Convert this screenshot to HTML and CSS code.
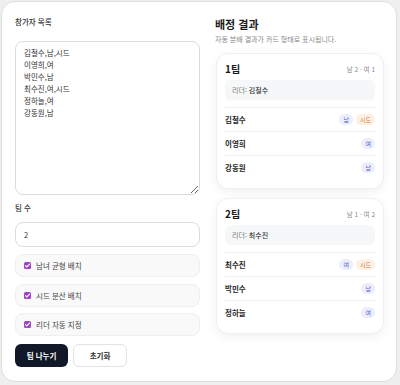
FILE: index.html
```html
<!DOCTYPE html>
<html lang="ko">
<head>
<meta charset="utf-8">
<link rel="stylesheet" href="styles.css">
</head>
<body>
<div class="app">
  <section class="left">
    <label class="label">참가자 목록</label>
    <textarea class="roster">김철수,남,시드
이영희,여
박민수,남
최수진,여,시드
정하늘,여
강동원,남</textarea>
    <label class="label label-count">팀 수</label>
    <input class="count" type="text" value="2">
    <label class="opt"><span class="check"><svg viewBox="0 0 8 8" width="8" height="8"><path d="M1.7 4.1 L3.3 5.7 L6.4 2.3" fill="none" stroke="#fff" stroke-width="1.3" stroke-linecap="round" stroke-linejoin="round"/></svg></span>남녀 균형 배치</label>
    <label class="opt"><span class="check"><svg viewBox="0 0 8 8" width="8" height="8"><path d="M1.7 4.1 L3.3 5.7 L6.4 2.3" fill="none" stroke="#fff" stroke-width="1.3" stroke-linecap="round" stroke-linejoin="round"/></svg></span>시드 분산 배치</label>
    <label class="opt opt-last"><span class="check"><svg viewBox="0 0 8 8" width="8" height="8"><path d="M1.7 4.1 L3.3 5.7 L6.4 2.3" fill="none" stroke="#fff" stroke-width="1.3" stroke-linecap="round" stroke-linejoin="round"/></svg></span>리더 자동 지정</label>
    <div class="actions">
      <button class="btn btn-primary">팀 나누기</button>
      <button class="btn btn-secondary">초기화</button>
    </div>
  </section>
  <section class="right">
    <h2 class="title">배정 결과</h2>
    <p class="sub">자동 분배 결과가 카드 형태로 표시됩니다.</p>
    <div class="team">
      <div class="team-head"><span class="team-name">1팀</span><span class="team-count">남 2 · 여 1</span></div>
      <div class="leader">리더: <span class="leader-name">김철수</span></div>
      <ul class="members">
        <li class="member"><span class="m-name">김철수</span><span class="tags"><span class="tag tag-g">남</span><span class="tag tag-s">시드</span></span></li>
        <li class="member"><span class="m-name">이영희</span><span class="tags"><span class="tag tag-g">여</span></span></li>
        <li class="member"><span class="m-name">강동원</span><span class="tags"><span class="tag tag-g">남</span></span></li>
      </ul>
    </div>
    <div class="team team-2">
      <div class="team-head"><span class="team-name">2팀</span><span class="team-count">남 1 · 여 2</span></div>
      <div class="leader">리더: <span class="leader-name">최수진</span></div>
      <ul class="members">
        <li class="member"><span class="m-name">최수진</span><span class="tags"><span class="tag tag-g">여</span><span class="tag tag-s">시드</span></span></li>
        <li class="member"><span class="m-name">박민수</span><span class="tags"><span class="tag tag-g">남</span></span></li>
        <li class="member"><span class="m-name">정하늘</span><span class="tags"><span class="tag tag-g">여</span></span></li>
      </ul>
    </div>
  </section>
</div>
</body>
</html>
```

FILE: styles.css
```css
* { box-sizing: border-box; }
html, body { margin: 0; }
body {
  background: #efefef;
  font-family: "Noto Sans CJK KR", "Noto Sans", sans-serif;
  color: #222;
}
.app {
  margin: 1px;
  width: 396px;
  height: 381px;
  background: #fff;
  border: 1px solid #dedede;
  border-radius: 14px;
  display: grid;
  grid-template-columns: 185px 170px;
  column-gap: 15px;
  padding: 15px 11px 0 13px;
  align-items: start;
}
.left { display: flex; flex-direction: column; }
.label {
  font-size: 7.5px;
  line-height: 10px;
  color: #333;
  font-weight: 500;
}
.roster {
  margin-top: 14px;
  width: 185px;
  height: 154px;
  border: 1px solid #dcdcdc;
  border-radius: 8px;
  padding: 5px 8px;
  font-family: inherit;
  font-size: 7.5px;
  line-height: 12px;
  color: #333;
  background: #fff;
  outline: none;
}
.label-count { margin-top: 8px; }
.count {
  margin-top: 9px;
  width: 185px;
  height: 25px;
  border: 1px solid #dcdcdc;
  border-radius: 8px;
  padding: 0 8px;
  font-family: inherit;
  font-size: 7.5px;
  color: #333;
  outline: none;
}
.opt {
  margin-top: 7px;
  height: 23px;
  display: flex;
  align-items: center;
  gap: 5px;
  padding-left: 8px;
  background: #f9f9fa;
  border: 1px solid #efefef;
  border-radius: 8px;
  font-size: 7.5px;
  color: #444;
}
.opt-last { margin-top: 6px; }
.check {
  width: 7px;
  height: 7px;
  border-radius: 1.5px;
  background: #a043c6;
  display: flex;
  align-items: center;
  justify-content: center;
}
.check svg { width: 7px; height: 7px; display: block; }
.actions {
  margin-top: 8px;
  display: flex;
  gap: 5px;
}
.btn {
  height: 23px;
  border-radius: 6px;
  font-family: inherit;
  font-size: 7.5px;
  font-weight: 700;
  padding: 0;
  cursor: pointer;
}
.btn-primary {
  width: 53px;
  background: #111827;
  color: #fff;
  border: none;
}
.btn-secondary {
  width: 54px;
  background: #fff;
  color: #333;
  border: 1px solid #e3e3e3;
}
.right { display: flex; flex-direction: column; }
.title {
  margin: 0;
  font-size: 11px;
  line-height: 14px;
  font-weight: 700;
  color: #1a1a1a;
}
.sub {
  margin: 3px 0 0;
  font-size: 7px;
  line-height: 10px;
  color: #8a8a8a;
}
.team {
  margin: 9px 1px 0;
  border: 1px solid #eff0f2;
  border-radius: 12px;
  padding: 8px 8px 9px;
  background: #fff;
  box-shadow: 0 3px 10px rgba(0, 0, 0, 0.06);
}
.team-2 { margin-top: 9px; }
.team-head {
  height: 14px;
  display: flex;
  align-items: center;
  justify-content: space-between;
}
.team-name {
  font-size: 10px;
  font-weight: 700;
  line-height: 14px;
  color: #1a1a1a;
}
.team-count {
  font-size: 6.5px;
  color: #8a8a8a;
}
.leader {
  margin-top: 4px;
  height: 20px;
  line-height: 20px;
  background: #f6f7f9;
  border-radius: 6px;
  padding-left: 7px;
  font-size: 7px;
  color: #777;
}
.leader-name { color: #333; font-weight: 500; }
.members {
  list-style: none;
  margin: 7px 0 0;
  padding: 0;
}
.member {
  height: 24px;
  border-top: 1px solid #f0f0f0;
  display: flex;
  align-items: center;
  justify-content: space-between;
}
.m-name {
  font-size: 7.5px;
  font-weight: 700;
  color: #2a2a2a;
}
.tags { display: flex; gap: 3px; }
.tag {
  height: 11px;
  line-height: 11px;
  padding: 0 4px;
  border-radius: 6px;
  font-size: 6px;
}
.tag-g { background: #eceefc; color: #5a5bc9; }
.tag-s { background: #fff0e3; color: #c87a3e; }
```
